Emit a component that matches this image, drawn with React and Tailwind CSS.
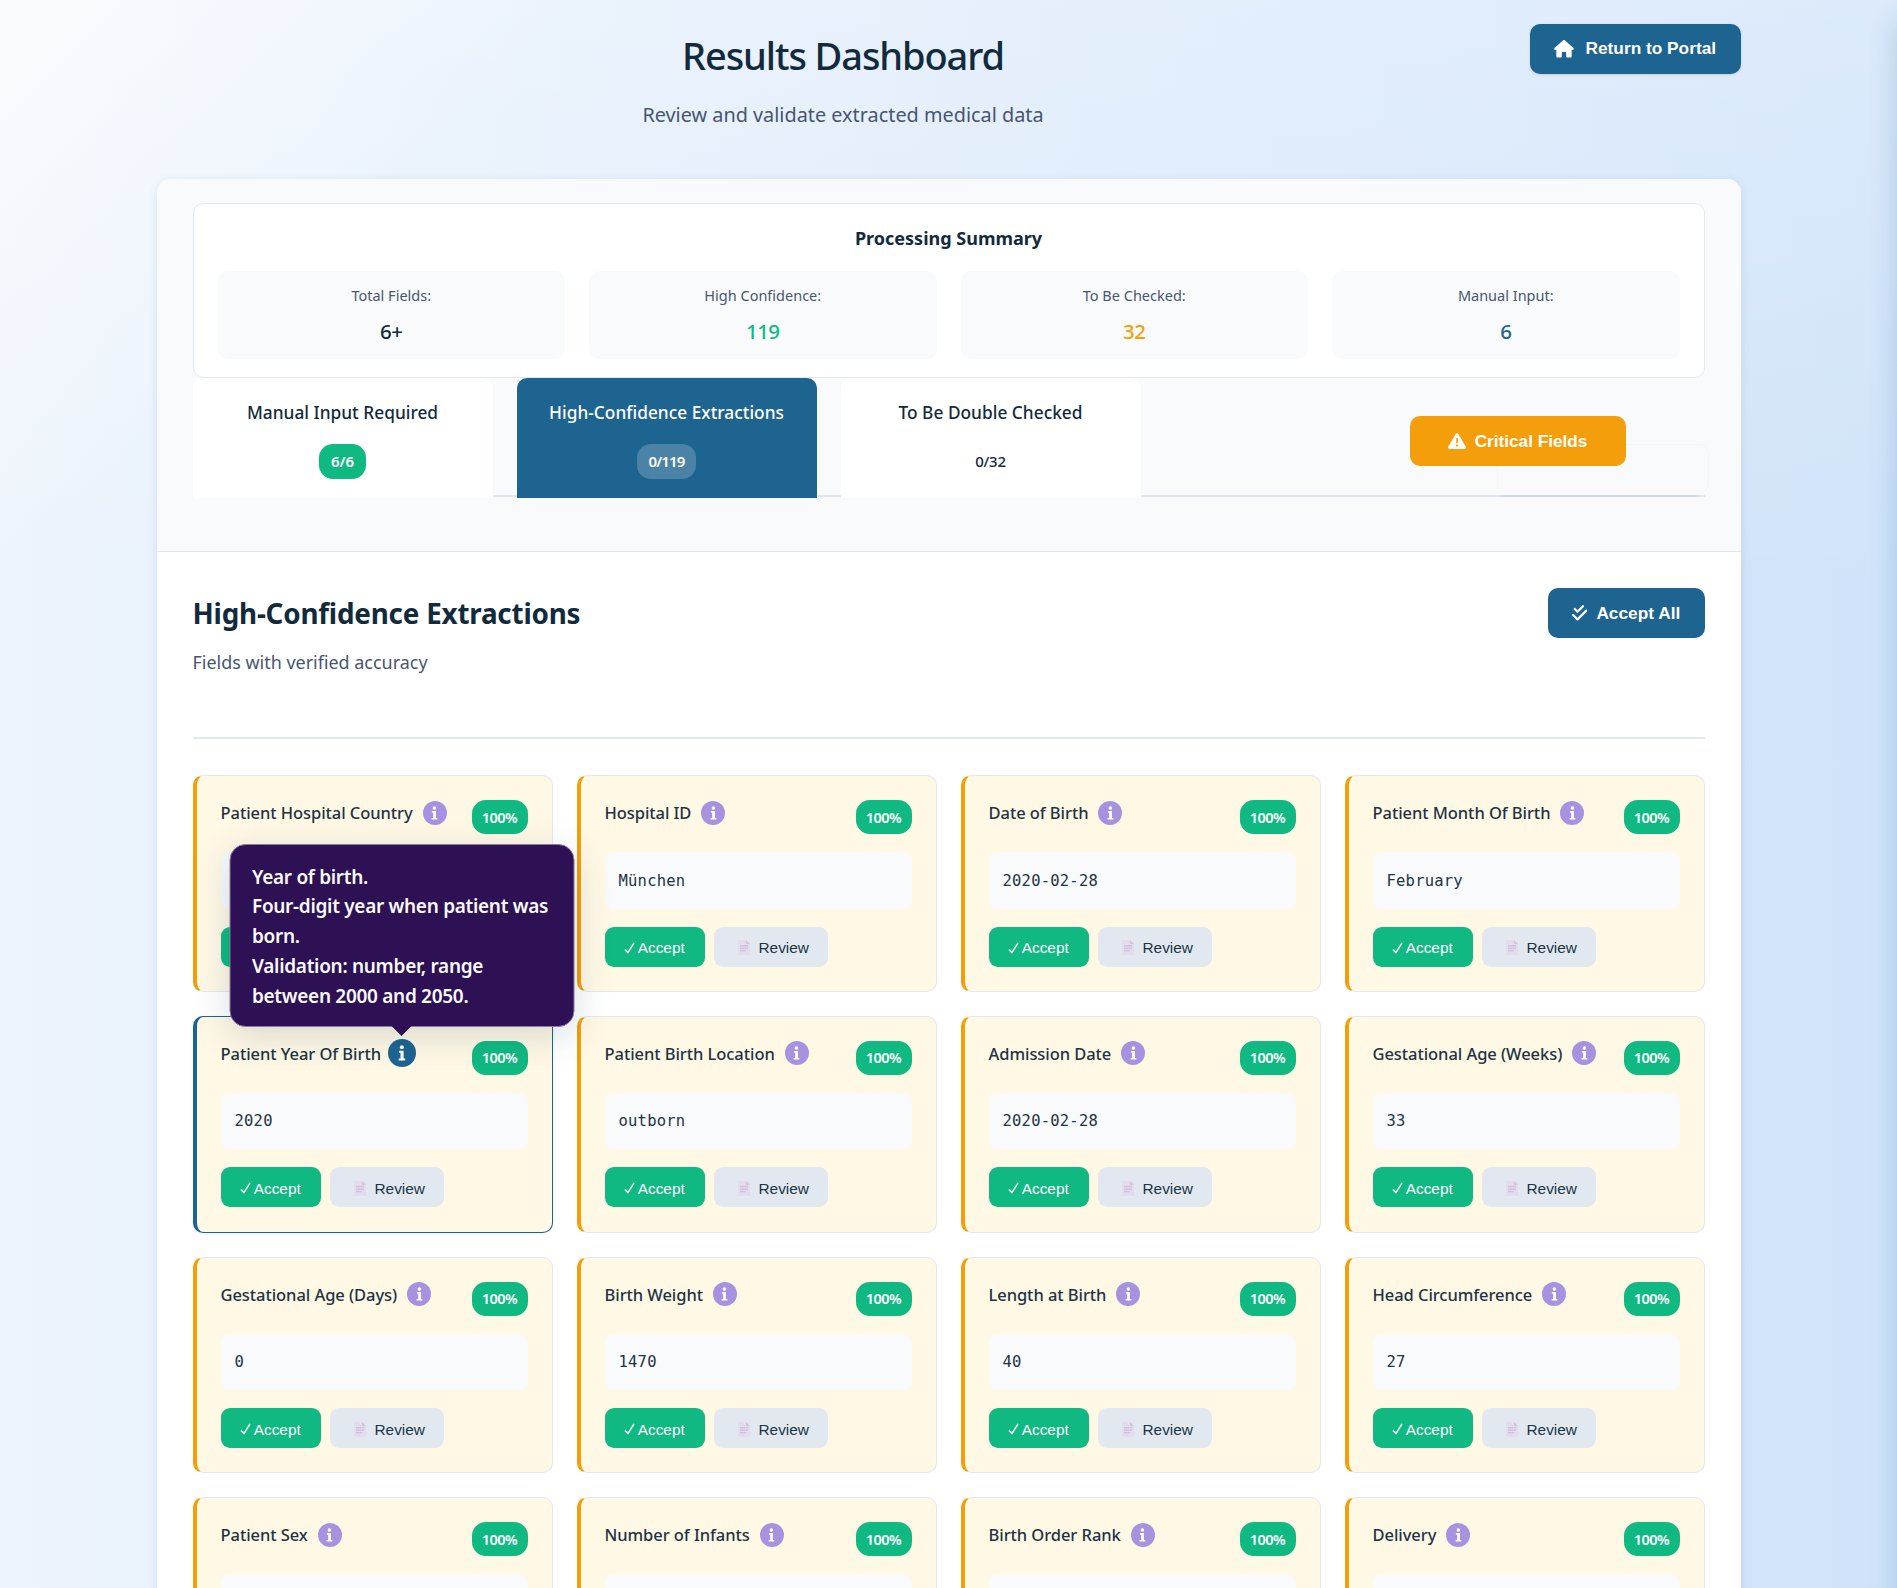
import { FaHouse, FaTriangleExclamation, FaCheckDouble } from "react-icons/fa6";

const stats = [
  { label: "Total Fields:", value: "6+", color: "text-[#112b3c]" },
  { label: "High Confidence:", value: "119", color: "text-[#10b981]" },
  { label: "To Be Checked:", value: "32", color: "text-[#f59e0b]" },
  { label: "Manual Input:", value: "6", color: "text-[#1e6491]" },
];

const fields = [
  { name: "Patient Hospital Country", value: "" },
  { name: "Hospital ID", value: "München" },
  { name: "Date of Birth", value: "2020-02-28" },
  { name: "Patient Month Of Birth", value: "February" },
  { name: "Patient Year Of Birth", value: "2020", active: true },
  { name: "Patient Birth Location", value: "outborn" },
  { name: "Admission Date", value: "2020-02-28" },
  { name: "Gestational Age (Weeks)", value: "33" },
  { name: "Gestational Age (Days)", value: "0" },
  { name: "Birth Weight", value: "1470" },
  { name: "Length at Birth", value: "40" },
  { name: "Head Circumference", value: "27" },
  { name: "Patient Sex" },
  { name: "Number of Infants" },
  { name: "Birth Order Rank" },
  { name: "Delivery" },
];

function PageIcon() {
  return (
    <svg viewBox="0 0 12 15" className="h-[15px] w-3 shrink-0">
      <path d="M0 0h8l4 4v11H0z" fill="#e6daee" />
      <path d="M8 0l4 4H8z" fill="#cfc4da" />
      <path d="M2 5.7h8M2 8.2h8M2 10.7h6" stroke="#c6b9d0" strokeWidth="1" />
    </svg>
  );
}

function CheckIcon() {
  return (
    <svg viewBox="0 0 11 12" className="h-3 w-[11px] shrink-0">
      <path d="M1 7.4L4 10.6L10 0.8" fill="none" stroke="white" strokeWidth="1.5" />
    </svg>
  );
}

function InfoIcon({ className }) {
  return (
    <svg viewBox="0 0 7 14" className={className} fill="currentColor">
      <circle cx="3.4" cy="2" r="1.75" />
      <path d="M0.9 5.1H4.9V11.9H6.3V13.6H0.6V11.9H2.2V6.8H0.9z" />
    </svg>
  );
}

function Tooltip() {
  return (
    <div className="absolute bottom-[38.5px] left-1/2 z-20 w-[345px] -translate-x-1/2 rounded-[16px] border border-[#8d7ba3] bg-[#2e1054] px-[21.5px] pt-[17.5px] pb-[14.5px] text-left text-[19px] leading-[29.7px] font-semibold tracking-[-0.3px] whitespace-nowrap text-[#f8fafc] shadow-[0_9px_36px_rgba(15,60,90,0.16)]">
      Year of birth.
      <br />
      Four-digit year when patient was
      <br />
      born.
      <br />
      Validation: number, range
      <br />
      between 2000 and 2050.
      <div className="absolute top-full left-1/2 -translate-x-1/2 border-x-[10px] border-t-[10px] border-x-transparent border-t-[#2e1054]" />
    </div>
  );
}

function InfoBadge({ active }) {
  return (
    <span
      className={
        active
          ? "relative -ml-px flex size-6 shrink-0 items-center justify-center"
          : "relative flex size-6 shrink-0 items-center justify-center"
      }
    >
      <span
        className={
          active
            ? "flex size-7 shrink-0 items-center justify-center rounded-full bg-[#1e6491] text-white"
            : "flex size-6 shrink-0 items-center justify-center rounded-full bg-[#a792e0] text-white"
        }
      >
        <InfoIcon className={active ? "h-4 w-2" : "h-[14px] w-[7px]"} />
      </span>
      {active && <Tooltip />}
    </span>
  );
}

function FieldActions() {
  return (
    <div className="mt-[18px] flex gap-[9px] font-['Liberation_Sans',Arial,sans-serif] text-[15.4px]">
      <button className="flex h-10 w-[100px] items-center justify-center gap-[2.5px] rounded-[9px] bg-[#10b981] pt-0.5 text-white">
        <CheckIcon />
        <span>Accept</span>
      </button>
      <button className="flex h-10 w-[114px] items-center rounded-[9px] bg-[#e2e8f0] pt-0.5 pl-6 text-[#1c3445]">
        <PageIcon />
        <span className="ml-[9px]">Review</span>
      </button>
    </div>
  );
}

function FieldCard({ name, value, active }) {
  return (
    <article
      className={
        active
          ? "h-[216.8px] rounded-[10px] border border-l-4 border-[#1e6491] bg-[#fff8e5] p-6 shadow-[0_1px_3px_rgba(0,0,0,0.08)]"
          : "h-[216.8px] rounded-[10px] border border-l-4 border-[#e2e8f0] border-l-[#f59e0b] bg-[#fff8e5] p-6"
      }
    >
      <div className="flex h-[52px] items-start justify-between">
        <div className="flex items-center gap-[10px]">
          <span className="pt-px text-[16.5px] leading-6 font-medium tracking-[-0.06px] whitespace-nowrap text-[#1c3445]">
            {name}
          </span>
          <InfoBadge active={active} />
        </div>
        <span className="flex h-[34px] w-14 items-center justify-center rounded-[14px] bg-[#10b981] pt-px text-[14.5px] font-semibold tracking-[-0.5px] text-white">
          100%
        </span>
      </div>
      <div className="flex h-[56.6px] items-center rounded-[9px] bg-[#f8fafc] px-[14px] pt-0.5 font-['DejaVu_Sans_Mono',monospace] text-[15.5px] tracking-[0.22px] text-[#1c3445]">
        {value}
      </div>
      {value !== undefined && <FieldActions />}
    </article>
  );
}

function Tab({ label, count, tone, badge }) {
  return (
    <div className={`relative flex h-[120px] w-[300px] flex-col items-center rounded-t-[10px] pt-[23px] ${tone}`}>
      <span className="text-[17.3px] leading-6 font-medium tracking-[0.02px]">{label}</span>
      <span className={`mt-[19px] flex h-[35px] items-center rounded-[14px] text-[15px] ${badge}`}>{count}</span>
    </div>
  );
}

export default function App() {
  return (
    <div className="relative h-[1588px] w-[1897px] overflow-hidden bg-[linear-gradient(135deg,rgba(253,253,255,0.65),rgba(253,253,255,0)_420px),linear-gradient(180deg,rgba(255,255,255,0.26),rgba(255,255,255,0)_600px),linear-gradient(90deg,#edf4fc,#d0e3fa)] font-['Noto_Sans','Open_Sans',sans-serif] text-[#112b3c]">
      <div className="absolute top-5 left-full h-[1700px] w-20 shadow-[-2px_0_24px_rgba(30,100,145,0.2)]" />
      <div className="mx-auto w-[1584px] pt-6">
        <header className="flex h-[155px] items-start">
          <div className="flex-1 text-center">
            <h1 className="pt-[3px] text-[38px] leading-[56px] font-medium tracking-[-1.1px]">Results Dashboard</h1>
            <p className="mt-4 text-[19.85px] leading-8 text-[#475670]">Review and validate extracted medical data</p>
          </div>
          <button className="flex h-[50px] w-[211px] items-center rounded-[10px] bg-[#1e6491] pl-6 font-['Liberation_Sans',Arial,sans-serif] text-[17.3px] font-bold text-white shadow-[0_1px_3px_rgba(0,0,0,0.12)]">
            <FaHouse className="h-[17.6px] w-5" />
            <span className="ml-3 pb-px whitespace-nowrap">Return to Portal</span>
          </button>
        </header>

        <main className="h-[1450px] overflow-hidden rounded-t-[14px] bg-white shadow-[0_2px_10px_rgba(30,100,145,0.12)]">
          <section className="h-[373px] border-b border-[#e2e8f0] bg-[#f9fafc] px-9 pt-6">
            <div className="h-[175px] rounded-[10px] border border-[#e2e8f0] bg-white px-6">
              <h2 className="pt-[18px] pb-[17px] text-center text-[18px] leading-8 font-bold">Processing Summary</h2>
              <div className="grid grid-cols-4 gap-6">
                {stats.map((s) => (
                  <div key={s.label} className="flex h-[88px] flex-col items-center rounded-[10px] bg-[#f8fafc] pt-3">
                    <span className="text-[14.5px] leading-6 text-[#475670]">{s.label}</span>
                    <span className={`mt-[10px] text-[20.5px] leading-7 font-medium tracking-[-0.5px] ${s.color}`}>
                      {s.value}
                    </span>
                  </div>
                ))}
              </div>
            </div>
            <div className="relative flex h-[119px] gap-6 border-b-2 border-[#e2e8f0]">
              <Tab
                label="Manual Input Required"
                count="6/6"
                tone="bg-white"
                badge="bg-[#10b981] px-3 font-semibold tracking-[-0.1px] text-white"
              />
              <Tab
                label="High-Confidence Extractions"
                count="0/119"
                tone="bg-[#1e6491] text-white"
                badge="bg-white/20 px-3 font-semibold tracking-[-0.9px] text-white"
              />
              <Tab label="To Be Double Checked" count="0/32" tone="bg-white" badge="px-3 font-medium tracking-[-0.2px]" />
              <div className="absolute right-0 -bottom-0.5 h-0.5 w-[212px] bg-[linear-gradient(90deg,transparent,#cbdae8_12px,#cbdae8_200px,transparent)]" />
              <div className="absolute -right-1 bottom-0.5 h-[49px] w-[212px] rounded-[10px] border border-b-0 border-[#f4f6f9]" />
              <button className="relative mt-[38px] ml-[245px] flex h-[50px] w-[216px] items-center justify-center gap-[9px] rounded-[10px] bg-[#f59e0b] font-['Liberation_Sans',Arial,sans-serif] text-[17.2px] font-bold text-white">
                <FaTriangleExclamation className="size-[18px]" />
                <span className="pt-px">Critical Fields</span>
              </button>
            </div>
          </section>

          <section className="px-9 pt-9">
            <div className="flex h-[151px] items-start justify-between border-b-2 border-[#e2e8f0]">
              <div>
                <h2 className="pt-[5px] text-[27.8px] leading-10 font-bold tracking-[-0.2px]">High-Confidence Extractions</h2>
                <p className="mt-[13px] text-[17.95px] leading-8 text-[#475670]">Fields with verified accuracy</p>
              </div>
              <button className="flex h-[50px] w-[157px] items-center rounded-[10px] bg-[#1e6491] pl-6 font-['Liberation_Sans',Arial,sans-serif] text-[17.3px] font-bold text-white">
                <FaCheckDouble className="h-[17.6px] w-[15.4px]" />
                <span className="ml-[9.5px] pt-px whitespace-nowrap">Accept All</span>
              </button>
            </div>
            <div className="mt-9 grid grid-cols-4 gap-6">
              {fields.map((f) => (
                <FieldCard key={f.name} {...f} />
              ))}
            </div>
          </section>
        </main>
      </div>
    </div>
  );
}
